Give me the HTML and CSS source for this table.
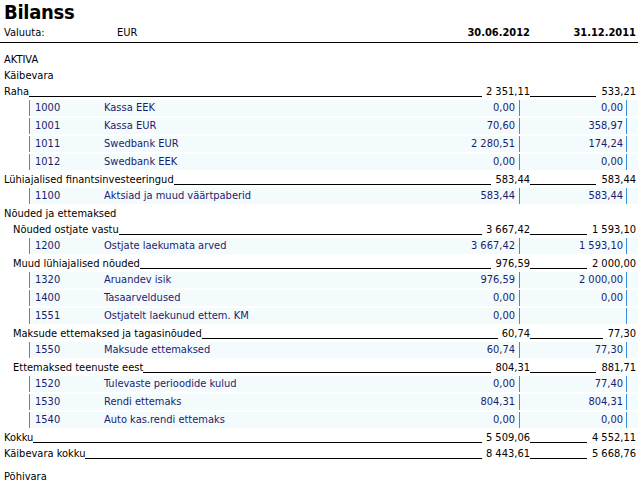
FILE: index.html
```html
<!DOCTYPE html>
<html lang="et">
<head>
<meta charset="utf-8">
<title>Bilanss</title>
<link rel="stylesheet" href="styles.css">
</head>
<body>
<div class="page">
  <div class="title">Bilanss</div>
  <div class="hdr">
    <span class="hlbl">Valuuta:</span>
    <span class="hcur">EUR</span>
    <span class="hd1">30.06.2012</span>
    <span class="hd2">31.12.2011</span>
  </div>

  <div class="sec first">AKTIVA</div>
  <div class="sec">Käibevara</div>

  <div class="grp"><span class="lbl">Raha</span><span class="c1"><span class="fill"></span><span class="n">2 351,11</span></span><span class="c2"><span class="fill"></span><span class="n">533,21</span></span></div>
  <div class="det"><span class="code">1000</span><span class="name">Kassa EEK</span><span class="v1">0,00</span><span class="v2">0,00</span><span class="tail"></span></div>
  <div class="det"><span class="code">1001</span><span class="name">Kassa EUR</span><span class="v1">70,60</span><span class="v2">358,97</span><span class="tail"></span></div>
  <div class="det"><span class="code">1011</span><span class="name">Swedbank EUR</span><span class="v1">2 280,51</span><span class="v2">174,24</span><span class="tail"></span></div>
  <div class="det"><span class="code">1012</span><span class="name">Swedbank EEK</span><span class="v1">0,00</span><span class="v2">0,00</span><span class="tail"></span></div>

  <div class="grp"><span class="lbl">Lühiajalised finantsinvesteeringud</span><span class="c1"><span class="fill"></span><span class="n">583,44</span></span><span class="c2"><span class="fill"></span><span class="n">583,44</span></span></div>
  <div class="det"><span class="code">1100</span><span class="name">Aktsiad ja muud väärtpaberid</span><span class="v1">583,44</span><span class="v2">583,44</span><span class="tail"></span></div>

  <div class="sec">Nõuded ja ettemaksed</div>
  <div class="grp sub"><span class="lbl">Nõuded ostjate vastu</span><span class="c1"><span class="fill"></span><span class="n">3 667,42</span></span><span class="c2"><span class="fill"></span><span class="n">1 593,10</span></span></div>
  <div class="det"><span class="code">1200</span><span class="name">Ostjate laekumata arved</span><span class="v1">3 667,42</span><span class="v2">1 593,10</span><span class="tail"></span></div>

  <div class="grp sub"><span class="lbl">Muud lühiajalised nõuded</span><span class="c1"><span class="fill"></span><span class="n">976,59</span></span><span class="c2"><span class="fill"></span><span class="n">2 000,00</span></span></div>
  <div class="det"><span class="code">1320</span><span class="name">Aruandev isik</span><span class="v1">976,59</span><span class="v2">2 000,00</span><span class="tail"></span></div>
  <div class="det"><span class="code">1400</span><span class="name">Tasaarveldused</span><span class="v1">0,00</span><span class="v2">0,00</span><span class="tail"></span></div>
  <div class="det"><span class="code">1551</span><span class="name">Ostjatelt laekunud ettem. KM</span><span class="v1">0,00</span><span class="v2"></span><span class="tail"></span></div>

  <div class="grp sub"><span class="lbl">Maksude ettemaksed ja tagasinõuded</span><span class="c1"><span class="fill"></span><span class="n">60,74</span></span><span class="c2"><span class="fill"></span><span class="n">77,30</span></span></div>
  <div class="det"><span class="code">1550</span><span class="name">Maksude ettemaksed</span><span class="v1">60,74</span><span class="v2">77,30</span><span class="tail"></span></div>

  <div class="grp sub"><span class="lbl">Ettemaksed teenuste eest</span><span class="c1"><span class="fill"></span><span class="n">804,31</span></span><span class="c2"><span class="fill"></span><span class="n">881,71</span></span></div>
  <div class="det"><span class="code">1520</span><span class="name">Tulevaste perioodide kulud</span><span class="v1">0,00</span><span class="v2">77,40</span><span class="tail"></span></div>
  <div class="det"><span class="code">1530</span><span class="name">Rendi ettemaks</span><span class="v1">804,31</span><span class="v2">804,31</span><span class="tail"></span></div>
  <div class="det"><span class="code">1540</span><span class="name">Auto kas.rendi ettemaks</span><span class="v1">0,00</span><span class="v2">0,00</span><span class="tail"></span></div>

  <div class="grp"><span class="lbl">Kokku</span><span class="c1"><span class="fill"></span><span class="n">5 509,06</span></span><span class="c2"><span class="fill"></span><span class="n">4 552,11</span></span></div>
  <div class="grp"><span class="lbl">Käibevara kokku</span><span class="c1"><span class="fill"></span><span class="n">8 443,61</span></span><span class="c2"><span class="fill"></span><span class="n">5 668,76</span></span></div>

  <div class="sec gap">Põhivara</div>
</div>
</body>
</html>
```

FILE: styles.css
```css
html, body {
  margin: 0;
  padding: 0;
  background: #ffffff;
}

body {
  font-family: "DejaVu Sans Condensed", "Liberation Sans", sans-serif;
  font-size: 11px;
  color: #000000;
}

.page {
  width: 638px;
  overflow: hidden;
}

.title {
  height: 25px;
  line-height: 25px;
  font-size: 20px;
  font-weight: bold;
  letter-spacing: -0.3px;
  padding-left: 4px;
}

.hdr {
  display: flex;
  height: 17px;
  line-height: 16px;
  border-bottom: 1px solid #000000;
  padding-right: 2px;
}

.hlbl {
  width: 113px;
  padding-left: 4px;
}

.hcur {
  flex: 1;
}

.hd1,
.hd2 {
  font-weight: bold;
  text-align: right;
}

.hd2 {
  width: 106px;
}

.sec {
  height: 16px;
  line-height: 16px;
  padding-left: 4px;
}

.sec.first {
  margin-top: 9px;
}

.sec.gap {
  margin-top: 7px;
}

.grp {
  display: flex;
  height: 16px;
  line-height: 16px;
  padding-left: 4px;
  padding-right: 2px;
  white-space: nowrap;
}

.grp.sub {
  padding-left: 13px;
}

.det + .grp {
  margin-top: 1px;
}

.c1 {
  flex: 1;
  display: flex;
  align-items: flex-end;
}

.c2 {
  width: 106px;
  display: flex;
  align-items: flex-end;
}

.fill {
  flex: 1;
  height: 0;
  border-bottom: 1px solid #000000;
  margin-bottom: 3px;
}

.c1 .n {
  padding-left: 4px;
}

.c2 .n {
  padding-left: 5px;
}

.det {
  display: flex;
  height: 16px;
  line-height: 16px;
  margin-left: 29px;
  margin-bottom: 2px;
  background: #f4fbfd;
  border-left: 1px solid #3b8fdc;
  color: #1c1c6e;
  white-space: nowrap;
}

.code {
  width: 74px;
  padding-left: 5px;
  box-sizing: border-box;
}

.name {
  flex: 1;
}

.v1,
.v2 {
  text-align: right;
  box-sizing: border-box;
  border-right: 1px solid #3b8fdc;
}

.v1 {
  width: 100px;
  padding-right: 4px;
}

.v2 {
  width: 107px;
  padding-right: 3px;
}

.tail {
  width: 11px;
}
```
